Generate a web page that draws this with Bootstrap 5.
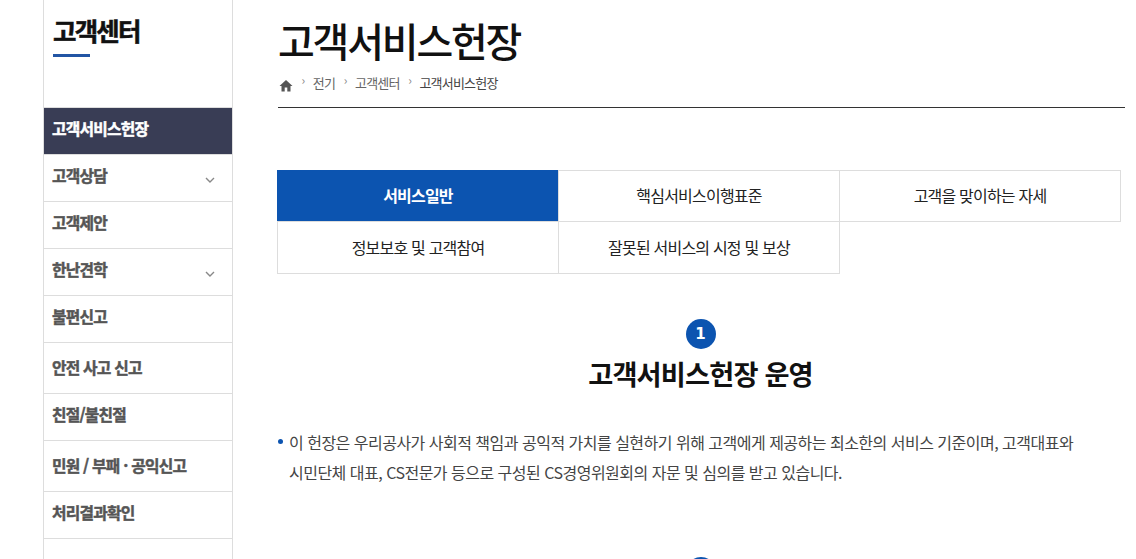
<!DOCTYPE html>
<html lang="ko"><head><meta charset="utf-8"><title>고객서비스헌장</title>
<link href="https://cdn.jsdelivr.net/npm/bootstrap@5.3.0/dist/css/bootstrap.min.css" rel="stylesheet">
<style>
html,body{height:559px;overflow:hidden}
body{font-family:"Noto Sans CJK KR","Noto Sans",sans-serif;background:#fff;color:#222;letter-spacing:-.05em}
.shell{padding-left:43px;align-items:flex-start;height:559px;overflow:hidden}
.side{width:190px;height:559px;flex:none;border-left:1px solid #ddd;border-right:1px solid #ddd}
.side-title{height:108px;padding:12px 0 0 9px;border-bottom:1px solid #ddd}
.side-title h2{font-size:25.500px;font-weight:700;line-height:36px;margin:0;color:#111;letter-spacing:-.07em;-webkit-text-stroke:.5px #111}
.side-bar{width:37px;height:3px;background:#2255a4;margin-top:6px}
.side-item{display:flex;align-items:center;justify-content:space-between;height:47px;padding:0 17px 4px 8px;border-bottom:1px solid #ddd;font-size:15.800px;font-weight:700;color:#555;letter-spacing:-.05em;text-decoration:none;-webkit-text-stroke:.45px #555}
.side-item svg{margin-top:7px}
.side-item.on{background:#393d55;color:#fff;-webkit-text-stroke:.45px #fff}
.side-item.tall{height:51px;padding-bottom:0}
.page{width:847px;margin-left:45px;flex:none}
.page h1{font-size:40px;font-weight:500;line-height:56px;margin:12px 0 0;color:#111;letter-spacing:-.055em}
.crumbs{height:41px;padding:0 0 8px 1px;border-bottom:1px solid #333;font-size:13px;color:#666;gap:8.500px;margin-top:-1px}
.crumbs .sep{color:#888;font-size:12px;margin-top:-6px}
.crumbs b{font-weight:400;color:#444}
.tabs{display:grid;grid-template-columns:repeat(3,281px);margin:62px 0 0 -1px;width:844px}
.tabs a{height:52px;border:1px solid #ddd;margin:0 -1px -1px 0;display:flex;align-items:center;justify-content:center;font-size:16px;color:#222;text-decoration:none;padding-bottom:2px}
.tabs a:nth-child(n+4){height:53px}
.tabs a.on{background:#0c54b0;border-color:#0c54b0;color:#fff;font-weight:700}
.num{width:30px;height:30px;border-radius:50%;background:#0c54b0;color:#fff;font-size:15px;font-weight:700;font-family:"DejaVu Sans",sans-serif;letter-spacing:0}
.sec{text-align:center;margin:0 0 0 -2px}
.sec.first{margin-top:46px}
.sec.second{margin-top:70px}
.sec h3{font-size:27.200px;font-weight:700;line-height:38px;margin:5px 0 0;color:#111;letter-spacing:-.03em}
.para{position:relative;margin:35px 0 0 11px;padding:0;font-size:16px;line-height:30px;color:#444;letter-spacing:-.032em;width:830px}
.para::before{content:"";position:absolute;left:-11px;top:12px;width:5px;height:5px;border-radius:50%;background:#0c54b0}
</style></head>
<body>
<div class="d-flex shell">
<nav class="side">
<div class="side-title"><h2>고객센터</h2><div class="side-bar"></div></div>
<a class="side-item on" href="#">고객서비스헌장</a>
<a class="side-item" href="#">고객상담<svg width="10" height="6" viewBox="0 0 10 6"><path d="M1 1l4 4 4-4" fill="none" stroke="#888" stroke-width="1.4"/></svg></a>
<a class="side-item" href="#">고객제안</a>
<a class="side-item" href="#">한난견학<svg width="10" height="6" viewBox="0 0 10 6"><path d="M1 1l4 4 4-4" fill="none" stroke="#888" stroke-width="1.4"/></svg></a>
<a class="side-item" href="#">불편신고</a>
<a class="side-item tall" href="#">안전 사고 신고</a>
<a class="side-item" href="#">친절/불친절</a>
<a class="side-item tall" href="#">민원 / 부패 · 공익신고</a>
<a class="side-item" href="#">처리결과확인</a>
</nav>
<main class="page">
<h1>고객서비스헌장</h1>
<div class="crumbs d-flex align-items-center">
<svg width="14" height="13" viewBox="0 0 14 13" class="mt-1"><path d="M7 1L.5 7H2.500v5.500h3.200V8.500h2.600v4h3.200V7h2z" fill="#555"/></svg>
<span class="sep">›</span><span>전기</span><span class="sep">›</span><span>고객센터</span><span class="sep">›</span><b>고객서비스헌장</b>
</div>
<div class="tabs">
<a class="on" href="#">서비스일반</a><a href="#">핵심서비스이행표준</a><a href="#">고객을 맞이하는 자세</a>
<a href="#">정보보호 및 고객참여</a><a href="#">잘못된 서비스의 시정 및 보상</a>
</div>
<div class="sec first">
<div class="num d-inline-flex align-items-center justify-content-center">1</div>
<h3>고객서비스헌장 운영</h3>
</div>
<p class="para">이 헌장은 우리공사가 사회적 책임과 공익적 가치를 실현하기 위해 고객에게 제공하는 최소한의 서비스 기준이며, 고객대표와<br>시민단체 대표, CS전문가 등으로 구성된 CS경영위원회의 자문 및 심의를 받고 있습니다.</p>
<div class="sec second"><div class="num d-inline-flex"></div></div>
</main>
</div>
</body></html>
